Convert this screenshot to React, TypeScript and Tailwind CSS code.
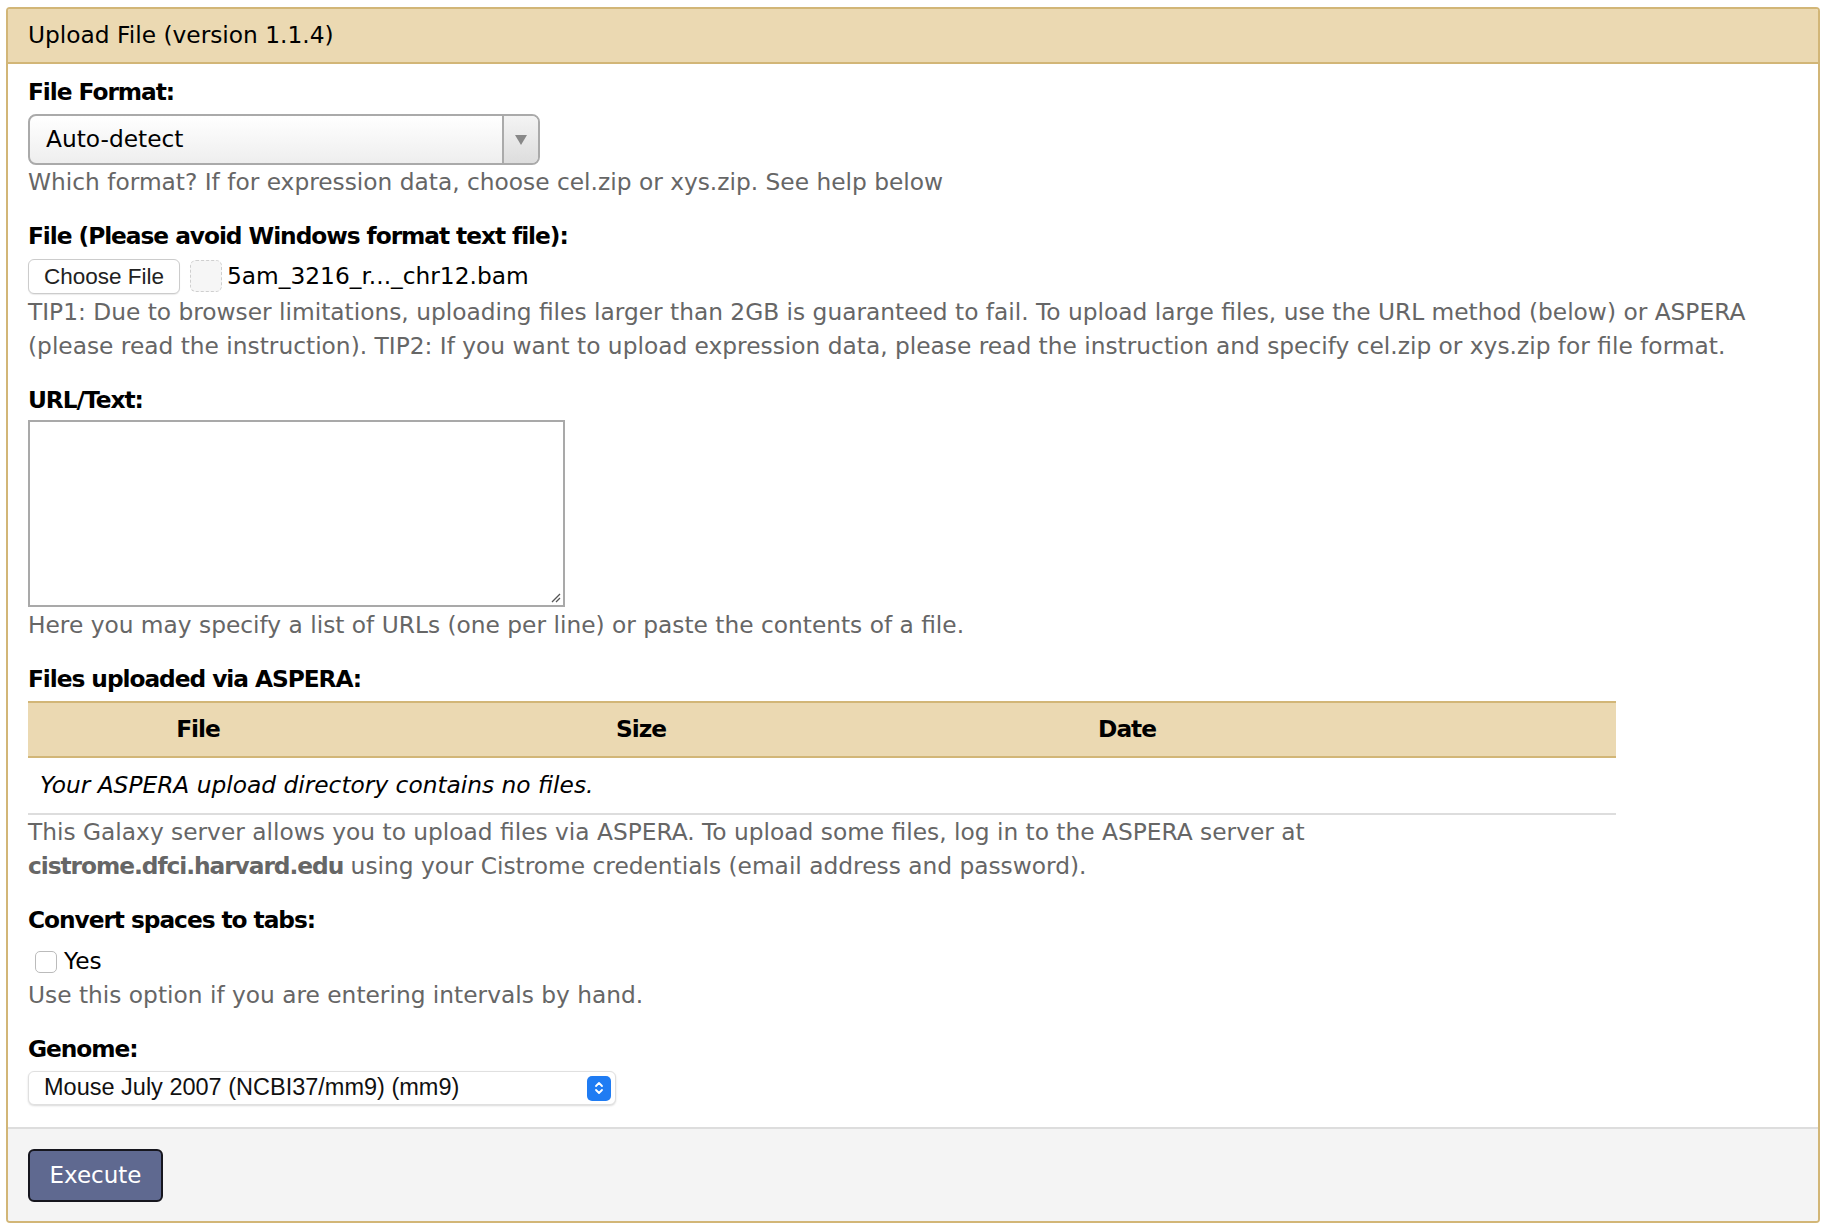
import React from "react";

function Label({ children }: { children: React.ReactNode }) {
  return <div className="font-bold text-black leading-[34px] tracking-[-1.05px]">{children}</div>;
}

function Help({ children }: { children: React.ReactNode }) {
  return <div className="text-[#666666] leading-[34px]">{children}</div>;
}

export default function App() {
  return (
    <div className="min-h-screen bg-white pt-[7px] pl-[6px] pr-[8px] pb-[6px] font-['DejaVu_Sans',sans-serif] text-[23.3px] tracking-normal text-black">
      <div className="border-2 border-[#d2b677] rounded-[4px] overflow-hidden">
        <div className="h-[55px] bg-[#ebd9b2] border-b-2 border-[#d2b677] px-[20px] flex items-center">
          Upload File (version 1.1.4)
        </div>

        <div className="bg-white px-[20px] pt-[11px] pb-[22px]">
          {/* File format */}
          <div>
            <Label>File Format:</Label>
            <div className="mt-[5px] w-[512px] h-[51px] flex border-2 border-[#aaaaaa] rounded-[8px] bg-gradient-to-b from-white to-[#eeeeee] overflow-hidden">
              <div className="flex-1 flex items-center pl-[16px]">Auto-detect</div>
              <div className="w-[36px] border-l-2 border-[#aaaaaa] bg-gradient-to-b from-[#f4f4f4] to-[#dddddd] flex items-center justify-center">
                <svg width="12" height="10" viewBox="0 0 12 10">
                  <path d="M0 0 L12 0 L6 10 Z" fill="#888888" />
                </svg>
              </div>
            </div>
            <Help>Which format? If for expression data, choose cel.zip or xys.zip. See help below</Help>
          </div>

          {/* File */}
          <div className="mt-[20px]">
            <Label>File (Please avoid Windows format text file):</Label>
            <div className="mt-[4px] flex items-center h-[38px]">
              <button className="h-[35px] w-[152px] rounded-[6px] border border-[#cccccc] bg-white shadow-[0_1px_1px_rgba(0,0,0,0.08)] font-['Liberation_Sans',sans-serif] text-[22.5px] text-[#222222]">
                Choose File
              </button>
              <div className="ml-[10px] w-[32px] h-[32px] rounded-[6px] border border-dashed border-[#cfcfcf] bg-[#f6f6f6]" />
              <span className="ml-[5px]">5am_3216_r..._chr12.bam</span>
            </div>
            <Help>
              TIP1: Due to browser limitations, uploading files larger than 2GB is guaranteed to fail. To upload large files, use the URL method (below) or ASPERA (please read the instruction). TIP2: If you want to upload expression data, please read the instruction and specify cel.zip or xys.zip for file format.
            </Help>
          </div>

          {/* URL/Text */}
          <div className="mt-[20px]">
            <Label>URL/Text:</Label>
            <div className="mt-[3px] relative w-[537px] h-[187px] border-2 border-[#a9a9a9] bg-white">
              <svg className="absolute right-[2px] bottom-[2px]" width="12" height="12" viewBox="0 0 12 12">
                <path d="M11 3 L3 11 M11 7 L7 11" stroke="#555555" strokeWidth="1.3" />
              </svg>
            </div>
            <div className="mt-[1px]">
              <Help>Here you may specify a list of URLs (one per line) or paste the contents of a file.</Help>
            </div>
          </div>

          {/* ASPERA */}
          <div className="mt-[20px]">
            <Label>Files uploaded via ASPERA:</Label>
            <div className="mt-[5px] w-[1588px]">
              <div className="h-[57px] bg-[#ebd9b2] border-y-2 border-[#d2b677] grid grid-cols-[340px_546px_426px_1fr] items-center font-bold tracking-[-1.05px]">
                <div className="text-center">File</div>
                <div className="text-center">Size</div>
                <div className="text-center">Date</div>
                <div />
              </div>
              <div className="h-[57px] border-b-2 border-[#dddddd] flex items-center pl-[12px] italic">
                Your ASPERA upload directory contains no files.
              </div>
            </div>
            <Help>
              This Galaxy server allows you to upload files via ASPERA. To upload some files, log in to the ASPERA server at
              <br />
              <span className="font-bold tracking-[-1.05px]">cistrome.dfci.harvard.edu</span> using your Cistrome credentials (email address and password).
            </Help>
          </div>

          {/* Convert */}
          <div className="mt-[20px]">
            <Label>Convert spaces to tabs:</Label>
            <div className="mt-[8px] flex items-center h-[33px]">
              <div className="ml-[7px] w-[22px] h-[22px] rounded-[5px] border border-[#bbbbbb] bg-white" />
              <span className="ml-[7px]">Yes</span>
            </div>
            <Help>Use this option if you are entering intervals by hand.</Help>
          </div>

          {/* Genome */}
          <div className="mt-[20px]">
            <Label>Genome:</Label>
            <div className="mt-[5px] w-[588px] h-[34px] flex items-center rounded-[6px] border border-[#e0e0e0] bg-white shadow-[0_1px_2px_rgba(0,0,0,0.15)] pl-[15px] pr-[4px]">
              <span className="flex-1 font-['Liberation_Sans',sans-serif] text-[23.5px] text-[#111111]">
                Mouse July 2007 (NCBI37/mm9) (mm9)
              </span>
              <div className="w-[24px] h-[25px] rounded-[5px] bg-[#1f7cf3] flex items-center justify-center">
                <svg width="10" height="16" viewBox="0 0 10 16">
                  <path d="M2 6 L5 3 L8 6 M2 10 L5 13 L8 10" fill="none" stroke="white" strokeWidth="1.8" strokeLinecap="round" strokeLinejoin="round" />
                </svg>
              </div>
            </div>
          </div>
        </div>

        <div className="bg-[#f4f4f4] border-t-2 border-[#dddddd] px-[20px] pt-[20px] pb-[19px]">
          <button className="w-[135px] h-[53px] rounded-[6px] border-2 border-[#16161e] bg-[#5f6990] text-white text-[23px]">
            Execute
          </button>
        </div>
      </div>
    </div>
  );
}
